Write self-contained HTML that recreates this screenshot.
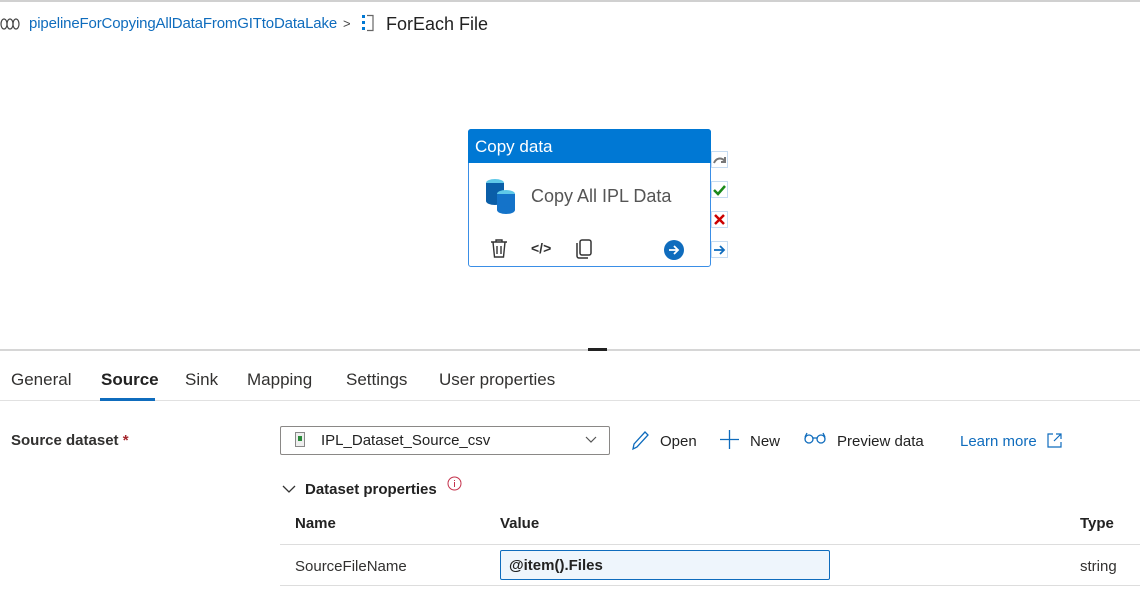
<!DOCTYPE html>
<html><head><style>
*{margin:0;padding:0;box-sizing:border-box}
body{width:1140px;height:601px;background:#fff;font-family:"Liberation Sans",sans-serif;color:#323130;position:relative;overflow:hidden}
.a{position:absolute;white-space:nowrap}
</style></head><body>
<div class="a" style="left:0;top:0;width:1140px;height:2px;background:#d0d0d0"></div>
<svg class="a" style="left:0;top:16px" width="22" height="16"><g fill="none" stroke="#444" stroke-width="1.2"><ellipse cx="4" cy="8" rx="3" ry="5"/><ellipse cx="10" cy="8" rx="3" ry="5"/><ellipse cx="16" cy="8" rx="3" ry="5"/></g></svg>
<div class="a" style="left:29px;top:15px;font-size:15px;color:#0f6cbd;letter-spacing:-0.15px">pipelineForCopyingAllDataFromGITtoDataLake</div>
<div class="a" style="left:343px;top:16px;font-size:13px;color:#444">&gt;</div>
<svg class="a" style="left:361px;top:14px" width="14" height="18"><rect x="1" y="1" width="3" height="3" fill="#0078d4"/><rect x="1" y="7" width="3" height="3" fill="#0078d4"/><rect x="1" y="13" width="3" height="3" fill="#0078d4"/><path d="M6 1.5h6v15h-6" fill="none" stroke="#666" stroke-width="1.2"/></svg>
<div class="a" style="left:386px;top:14px;font-size:18px;color:#222">ForEach File</div>

<div class="a" style="left:468px;top:129px;width:243px;height:138px;border:1px solid #3a8ee6;border-radius:3px;background:#fff"></div>
<div class="a" style="left:468px;top:129px;width:243px;height:34px;background:#0078d4;border-radius:3px 3px 0 0;color:#fff;font-size:17px;padding:8px 0 0 7px">Copy data</div>
<svg class="a" style="left:484px;top:178px" width="34" height="38"><ellipse cx="11" cy="5" rx="9" ry="4" fill="#5fc8e8"/><rect x="2" y="5" width="18" height="18" fill="#0a5ea8"/><ellipse cx="11" cy="23" rx="9" ry="4" fill="#0a5ea8"/><ellipse cx="22" cy="16" rx="9" ry="4" fill="#5fc8e8"/><rect x="13" y="16" width="18" height="16" fill="#1473c9"/><ellipse cx="22" cy="32" rx="9" ry="4" fill="#1473c9"/></svg>
<div class="a" style="left:531px;top:186px;font-size:18px;color:#555">Copy All IPL Data</div>
<svg class="a" style="left:489px;top:238px" width="20" height="22"><path d="M2 4h16M7 4V2h6v2M4 4l1.5 15h9L16 4M8 8v8M12 8v8" fill="none" stroke="#333" stroke-width="1.4"/></svg>
<div class="a" style="left:531px;top:240px;font-size:14px;color:#333;font-weight:bold">&lt;/&gt;</div>
<svg class="a" style="left:574px;top:238px" width="20" height="22"><rect x="6" y="2" width="11" height="15" rx="2" fill="none" stroke="#333" stroke-width="1.5"/><path d="M3 5v13a2 2 0 0 0 2 2h9" fill="none" stroke="#333" stroke-width="1.5"/></svg>
<svg class="a" style="left:664px;top:240px" width="20" height="20"><circle cx="10" cy="10" r="10" fill="#0f6cbd"/><path d="M5 10h9M10 6l4 4-4 4" fill="none" stroke="#fff" stroke-width="1.8"/></svg>
<svg class="a" style="left:711px;top:151px" width="18" height="110"><g fill="#fff" stroke="#c6dcf2"><rect x="0.5" y="0.5" width="16" height="16"/><rect x="0.5" y="30.5" width="16" height="16"/><rect x="0.5" y="60.5" width="16" height="16"/><rect x="0.5" y="90.5" width="16" height="16"/></g><path d="M3 12c2-5 7-6 11-2M14 6v5h-4" fill="none" stroke="#777" stroke-width="2"/><path d="M3 39l4 4 7-8" fill="none" stroke="#1a8a1a" stroke-width="2.5"/><path d="M4 64l9 9M13 64l-9 9" stroke="#c00" stroke-width="2.5"/><path d="M3 99h10M9 95l4 4-4 4" fill="none" stroke="#0f6cbd" stroke-width="1.8"/></svg>

<div class="a" style="left:0;top:349px;width:1140px;height:2px;background:#d6d6d6"></div>
<div class="a" style="left:588px;top:348px;width:19px;height:3px;background:#222"></div>
<div class="a" style="left:11px;top:370px;font-size:17px;color:#323130">General</div>
<div class="a" style="left:101px;top:370px;font-size:17px;color:#222;font-weight:bold">Source</div>
<div class="a" style="left:185px;top:370px;font-size:17px">Sink</div>
<div class="a" style="left:247px;top:370px;font-size:17px">Mapping</div>
<div class="a" style="left:346px;top:370px;font-size:17px">Settings</div>
<div class="a" style="left:439px;top:370px;font-size:17px">User properties</div>
<div class="a" style="left:0;top:400px;width:1140px;height:1px;background:#e1e1e1"></div>
<div class="a" style="left:100px;top:398px;width:55px;height:3px;background:#0f6cbd"></div>

<div class="a" style="left:11px;top:432px;font-size:15px;font-weight:bold;color:#323130">Source dataset <span style="color:#a4262c">*</span></div>
<div class="a" style="left:280px;top:426px;width:330px;height:29px;border:1px solid #8a8886;border-radius:2px"></div>
<svg class="a" style="left:295px;top:432px" width="10" height="15"><rect x="0.5" y="0.5" width="9" height="14" fill="#eee" stroke="#888"/><rect x="3" y="4" width="4" height="5" fill="#2a8a3a"/></svg>
<div class="a" style="left:321px;top:432px;font-size:15px;color:#222">IPL_Dataset_Source_csv</div>
<svg class="a" style="left:585px;top:436px" width="12" height="8"><path d="M1 1l5 5 5-5" fill="none" stroke="#555" stroke-width="1.2"/></svg>
<svg class="a" style="left:630px;top:429px" width="20" height="22"><path d="M3 20l1-5L15 3l3 3L7 18z" fill="none" stroke="#0f6cbd" stroke-width="1.3"/></svg>
<div class="a" style="left:660px;top:433px;font-size:15px;color:#222">Open</div>
<svg class="a" style="left:720px;top:430px" width="19" height="19"><path d="M9.5 0v19M0 9.5h19" stroke="#0f6cbd" stroke-width="1.3"/></svg>
<div class="a" style="left:750px;top:433px;font-size:15px;color:#222">New</div>
<svg class="a" style="left:804px;top:432px" width="22" height="12"><g fill="none" stroke="#0f6cbd" stroke-width="1.3"><circle cx="5" cy="7" r="4"/><circle cx="17" cy="7" r="4"/><path d="M9 6h4M1 5l2-4M21 5l-2-4"/></g></svg>
<div class="a" style="left:837px;top:433px;font-size:15px;color:#222">Preview data</div>
<div class="a" style="left:960px;top:433px;font-size:15px;color:#0f6cbd">Learn more</div>
<svg class="a" style="left:1047px;top:433px" width="15" height="15"><path d="M6 1H1v13h13V9M9 1h5v5M14 1L7 8" fill="none" stroke="#0f6cbd" stroke-width="1.2"/></svg>

<svg class="a" style="left:282px;top:484px" width="14" height="10"><path d="M1 2l6 6 6-6" fill="none" stroke="#333" stroke-width="1.3"/></svg>
<div class="a" style="left:305px;top:481px;font-size:15px;font-weight:bold;color:#222">Dataset properties</div>
<svg class="a" style="left:447px;top:476px" width="15" height="15"><circle cx="7.5" cy="7.5" r="6.5" fill="none" stroke="#c4314b" stroke-width="1"/><path d="M7.5 6v5M7.5 4v1" stroke="#c4314b"/></svg>
<div class="a" style="left:295px;top:515px;font-size:15px;font-weight:bold;color:#222">Name</div>
<div class="a" style="left:500px;top:515px;font-size:15px;font-weight:bold;color:#222">Value</div>
<div class="a" style="left:1080px;top:515px;font-size:15px;font-weight:bold;color:#222">Type</div>
<div class="a" style="left:280px;top:544px;width:860px;height:1px;background:#ddd"></div>
<div class="a" style="left:295px;top:558px;font-size:15px;color:#323130">SourceFileName</div>
<div class="a" style="left:500px;top:550px;width:330px;height:30px;border:1px solid #0f6cbd;border-radius:2px;background:#eef5fc;font-size:15px;font-weight:bold;color:#222;padding:6px 0 0 8px">@item().Files</div>
<div class="a" style="left:1080px;top:558px;font-size:15px;color:#323130">string</div>
<div class="a" style="left:280px;top:585px;width:860px;height:1px;background:#ddd"></div>
</body></html>
